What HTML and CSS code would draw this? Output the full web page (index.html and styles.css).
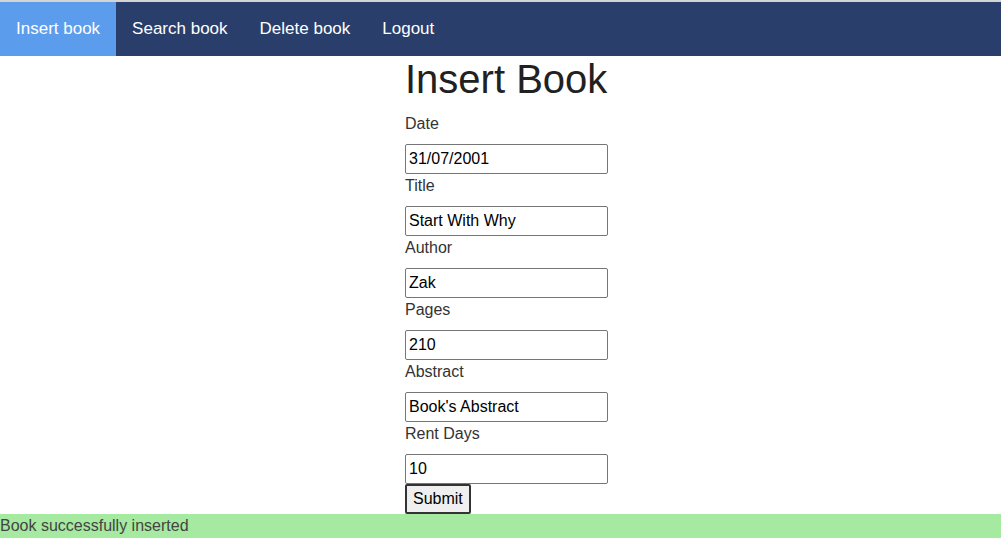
FILE: index.html
```html
<!DOCTYPE html>
<html>
<head>
<meta charset="utf-8">
<link rel="stylesheet" href="styles.css">
</head>
<body>
<nav class="topnav">
  <a class="nav-item active" href="#">Insert book</a>
  <a class="nav-item" href="#">Search book</a>
  <a class="nav-item" href="#">Delete book</a>
  <a class="nav-item" href="#">Logout</a>
</nav>
<main class="content">
  <form class="book-form">
    <h1 class="title">Insert Book</h1>
    <label class="field-label">Date</label>
    <input class="field" type="text" value="31/07/2001">
    <label class="field-label">Title</label>
    <input class="field" type="text" value="Start With Why">
    <label class="field-label">Author</label>
    <input class="field" type="text" value="Zak">
    <label class="field-label">Pages</label>
    <input class="field" type="text" value="210">
    <label class="field-label">Abstract</label>
    <input class="field" type="text" value="Book's Abstract">
    <label class="field-label">Rent Days</label>
    <input class="field" type="text" value="10">
    <button class="submit" type="button">Submit</button>
  </form>
</main>
<footer class="status">Book successfully inserted</footer>
</body>
</html>
```
FILE: styles.css
```css
html, body {
  margin: 0;
  padding: 0;
}
body {
  font-family: "Liberation Sans", Arial, sans-serif;
  font-size: 16px;
  color: #333;
  background: #fff;
  border-top: 2px solid #d4d4d4;
  height: 536px;
  display: flex;
  flex-direction: column;
  overflow: hidden;
}
.topnav {
  display: flex;
  background: #293e6b;
  height: 54px;
  flex-shrink: 0;
}
.nav-item {
  display: flex;
  align-items: center;
  padding: 0 16px;
  color: #fff;
  text-decoration: none;
  font-size: 17px;
}
.nav-item.active {
  background: #5b9cec;
}
.content {
  flex: 1;
  display: flex;
  justify-content: center;
}
.book-form {
  display: flex;
  flex-direction: column;
  align-items: flex-start;
  width: 203px;
  margin-left: 12px;
}
.title {
  margin: 0;
  font-size: 40px;
  font-weight: normal;
  color: #212121;
  line-height: 46px;
  margin-bottom: 10px;
}
.field-label {
  display: block;
  line-height: 18px;
  margin-top: 3px;
  margin-bottom: 11px;
}
.field {
  box-sizing: border-box;
  width: 203px;
  height: 30px;
  border: 1px solid #767676;
  border-radius: 2px;
  padding: 0 3px;
  font-family: "Liberation Sans", Arial, sans-serif;
  font-size: 16px;
  color: #000;
  margin: 0;
}
.submit {
  box-sizing: border-box;
  height: 30px;
  padding: 0 6px;
  border: 2px solid #333;
  border-radius: 2px;
  background: #efefef;
  font-family: "Liberation Sans", Arial, sans-serif;
  font-size: 16px;
  color: #000;
  margin: 0;
}
.status {
  background: #a6e9a0;
  color: #444;
  height: 24px;
  line-height: 24px;
  padding: 0;
  flex-shrink: 0;
}
```
